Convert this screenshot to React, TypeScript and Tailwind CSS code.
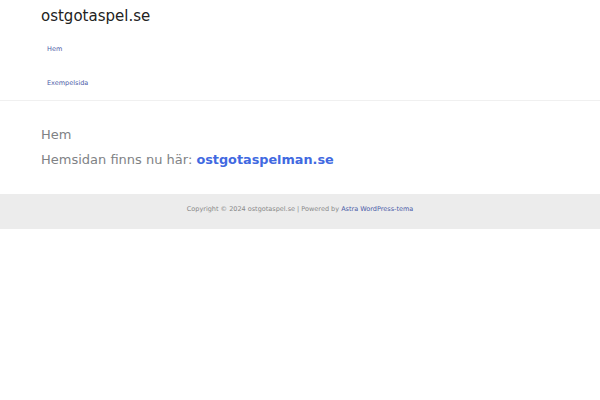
export default function App() {
  return (
    <div className="w-[600px] h-[400px] bg-white" style={{ fontFamily: '"DejaVu Sans", sans-serif' }}>
      <header className="border-b border-[#f0f0f0]">
        <div className="px-[41px] pt-[6px] h-[100px] flex flex-col overflow-hidden">
          <div className="shrink-0 text-[15px] leading-[20px] text-[#222]">ostgotaspel.se</div>
          <nav className="shrink-0 flex flex-col mt-[7px]">
            <a className="shrink-0 h-[34px] flex items-center px-[6px] text-[6.5px] text-[#4a5ba8]">Hem</a>
            <a className="shrink-0 h-[34px] flex items-center px-[6px] text-[6.5px] text-[#4a5ba8]">Exempelsida</a>
          </nav>
        </div>
      </header>
      <main className="px-[41px] pt-[25px] h-[93px]">
        <h1 className="text-[13px] leading-[18px] text-[#808285]">Hem</h1>
        <p className="mt-[7px] text-[13px] leading-[18px] text-[#808285]">
          Hemsidan finns nu här: <a className="font-bold text-[12.8px] text-[#4169e1]">ostgotaspelman.se</a>
        </p>
      </main>
      <footer className="bg-[#ececec] h-[35px] pt-[10px] flex justify-center text-[6.5px] leading-[10px] text-[#888]">
        <span>
          Copyright © 2024 ostgotaspel.se | Powered by <a className="text-[#4a5ba8]">Astra WordPress-tema</a>
        </span>
      </footer>
    </div>
  );
}
